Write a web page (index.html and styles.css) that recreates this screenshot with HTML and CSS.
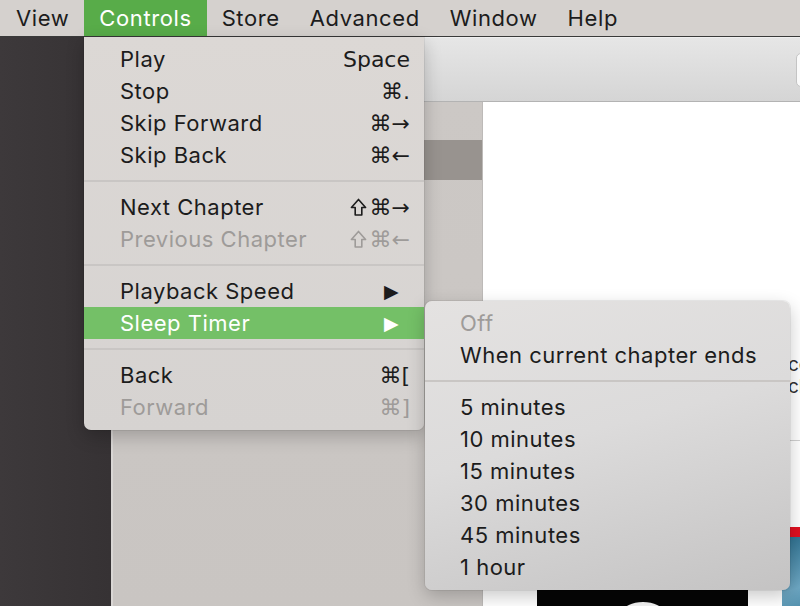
FILE: index.html
```html
<!DOCTYPE html>
<html>
  <head>
    <title>Controls menu</title>
    <link rel="stylesheet" href="styles.css">
  </head>
  <body>
    <div class="menubar">
      <span class="menubar-item">View</span>
      <span class="menubar-item is-open">Controls</span>
      <span class="menubar-item">Store</span>
      <span class="menubar-item">Advanced</span>
      <span class="menubar-item">Window</span>
      <span class="menubar-item">Help</span>
    </div>

    <div class="desktop">
      <div class="dock-strip"></div>
      <div class="window">
        <div class="toolbar">
          <div class="search-field"></div>
        </div>
        <div class="window-body">
          <div class="sidebar">
            <div class="sidebar-row is-selected"></div>
          </div>
          <div class="content">
            <div class="artwork"><div class="artwork-shape"></div></div>
            <div class="details">
              <p class="details-text">co</p>
              <p class="details-text">cl</p>
              <div class="details-rule"></div>
              <div class="details-cover"></div>
            </div>
          </div>
        </div>
      </div>
    </div>

    <div class="menu controls-menu">
      <div class="menu-item"><span>Play</span><span class="shortcut">Space</span></div>
      <div class="menu-item"><span>Stop</span><span class="shortcut">⌘.</span></div>
      <div class="menu-item"><span>Skip Forward</span><span class="shortcut">⌘→</span></div>
      <div class="menu-item"><span>Skip Back</span><span class="shortcut">⌘←</span></div>
      <div class="menu-separator"></div>
      <div class="menu-item">
        <span>Next Chapter</span>
        <span class="shortcut">
          <svg class="shift-key" viewBox="0 0 18 20" width="17" height="19"><path d="M9 1.5 L16.5 10 H12.5 V18 H5.5 V10 H1.5 Z" /></svg>⌘→
        </span>
      </div>
      <div class="menu-item is-disabled">
        <span>Previous Chapter</span>
        <span class="shortcut">
          <svg class="shift-key" viewBox="0 0 18 20" width="17" height="19"><path d="M9 1.5 L16.5 10 H12.5 V18 H5.5 V10 H1.5 Z" /></svg>⌘←
        </span>
      </div>
      <div class="menu-separator"></div>
      <div class="menu-item"><span>Playback Speed</span><span class="submenu-arrow">▶</span></div>
      <div class="menu-item is-highlighted"><span>Sleep Timer</span><span class="submenu-arrow">▶</span></div>
      <div class="menu-separator"></div>
      <div class="menu-item"><span>Back</span><span class="shortcut">⌘[</span></div>
      <div class="menu-item is-disabled"><span>Forward</span><span class="shortcut">⌘]</span></div>
    </div>

    <div class="menu sleep-menu">
      <div class="menu-item is-disabled"><span>Off</span></div>
      <div class="menu-item"><span>When current chapter ends</span></div>
      <div class="menu-separator"></div>
      <div class="menu-item"><span>5 minutes</span></div>
      <div class="menu-item"><span>10 minutes</span></div>
      <div class="menu-item"><span>15 minutes</span></div>
      <div class="menu-item"><span>30 minutes</span></div>
      <div class="menu-item"><span>45 minutes</span></div>
      <div class="menu-item"><span>1 hour</span></div>
    </div>
  </body>
</html>
```

FILE: styles.css
```css
body {
  margin: 0;
  width: 800px;
  height: 606px;
  overflow: hidden;
  font-family: Inter, "Noto Sans", sans-serif;
  color: #1c1c1c;
  background: #3b3739;
}

.menubar {
  display: flex;
  height: 36px;
  padding-left: 1px;
  background: #d5d1ce;
  border-bottom: 1px solid #3a3a3a;
  font-size: 22px;
  letter-spacing: 0.6px;
}

.menubar-item {
  display: flex;
  align-items: center;
  padding: 0 15px;
}

.menubar-item.is-open {
  background: #58ac49;
  color: #fff;
}

.desktop {
  display: flex;
  height: 569px;
}

.dock-strip {
  width: 111px;
  flex-shrink: 0;
  background: linear-gradient(90deg, #3d393b, #363234);
}

.window {
  flex: 1;
  display: flex;
  flex-direction: column;
  min-width: 0;
}

.toolbar {
  height: 63px;
  flex-shrink: 0;
  display: flex;
  align-items: center;
  justify-content: flex-end;
  background: linear-gradient(180deg, #e6e6e6, #d5d5d5);
  border-top: 1px solid #efefef;
  border-bottom: 1px solid #b3b3b3;
}

.search-field {
  width: 20px;
  height: 32px;
  margin-right: -18px;
  background: #fafafa;
  border: 1px solid #c4c4c4;
  border-radius: 5px;
}

.window-body {
  flex: 1;
  min-height: 0;
  display: flex;
  overflow: hidden;
}

.sidebar {
  width: 369px;
  flex-shrink: 0;
  padding-top: 38px;
  background: linear-gradient(180deg, #ccc8c5, #c9c5c2);
  border-left: 2px solid #d9d6d4;
  border-right: 1px solid #bdbab8;
}

.sidebar-row.is-selected {
  height: 40px;
  background: #98938f;
}

.content {
  flex: 1;
  display: flex;
  padding-left: 54px;
  background: #fff;
}

.artwork {
  width: 211px;
  height: 30px;
  margin-top: 488px;
  flex-shrink: 0;
  display: flex;
  justify-content: center;
  background: #050505;
}

.artwork-shape {
  width: 40px;
  height: 20px;
  margin-top: 12px;
  border-radius: 50% 50% 0 0;
  background: #f2f2f2;
}

.details {
  margin-left: 34px;
  padding-top: 252px;
  width: 40px;
  flex-shrink: 0;
}

.details-text {
  margin: 0;
  padding-left: 6px;
  font-size: 19px;
  line-height: 22px;
  color: #333;
}

.details-rule {
  height: 1px;
  margin-top: 42px;
  background: #d0d0d0;
}

.details-cover {
  height: 80px;
  margin-top: 86px;
  border-top: 10px solid #e01020;
  background: linear-gradient(160deg, #2d6f8e, #6ea8c4 60%, #3d7d9a);
}

.menu {
  position: absolute;
  box-sizing: border-box;
  font-size: 22px;
  letter-spacing: 0.5px;
  box-shadow: 0 6px 18px rgba(0, 0, 0, 0.22), 0 0 0 1px rgba(0, 0, 0, 0.06);
}

.controls-menu {
  left: 84px;
  top: 37px;
  width: 340px;
  padding: 6px 0 7px;
  border-radius: 0 0 7px 7px;
  background: linear-gradient(180deg, #dcd8d5, #d6d3d1);
}

.sleep-menu {
  left: 425px;
  top: 301px;
  width: 365px;
  padding: 6px 0 7px;
  border-radius: 7px;
  background: linear-gradient(165deg, #e4e2e1, #dcdbdb 45%, #c4c3c3);
}

.menu-item {
  display: flex;
  align-items: center;
  justify-content: space-between;
  height: 32px;
  padding: 0 14px 0 36px;
}

.sleep-menu .menu-item {
  padding-left: 35px;
}

.menu-item.is-disabled {
  color: #9e9b99;
}

.menu-item.is-highlighted {
  background: #74c067;
  color: #fff;
}

.shortcut {
  display: flex;
  align-items: center;
  font-family: "DejaVu Sans", Inter, sans-serif;
  font-size: 22px;
  letter-spacing: 0;
}

.shift-key {
  margin-right: 3px;
  fill: none;
  stroke: currentColor;
  stroke-width: 1.7;
  stroke-linejoin: round;
}

.submenu-arrow {
  margin-right: 11px;
  font-family: "DejaVu Sans", sans-serif;
  font-size: 19px;
}

.menu-separator {
  height: 2px;
  margin: 9px 0;
  background: #c9c6c4;
}
```
